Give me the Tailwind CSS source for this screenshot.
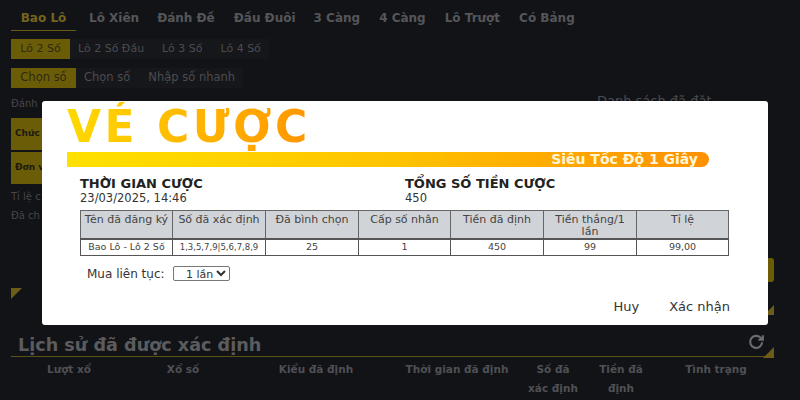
<!DOCTYPE html>
<html>
  <head>
    <meta charset="UTF-8" />
    <script src="https://cdn.jsdelivr.net/npm/@tailwindcss/browser@4"></script>
  </head>
  <body class="relative h-[400px] w-[800px] overflow-hidden bg-[#121317] font-['DejaVu_Sans',sans-serif]">
    <!-- page behind the dialog -->
    <div class="flex h-full flex-col pl-[11px]">
      <nav class="flex h-[31px] items-center pt-[5px] text-[12px] font-bold text-[#55565a]">
        <span class="flex h-[26px] w-[65px] items-center justify-center border-b border-[#6b5a16] text-[#75641c]">Bao Lô</span>
        <span class="ml-[13px]">Lô Xiên</span>
        <span class="ml-[18px]">Đánh Đề</span>
        <span class="ml-[19px]">Đầu Đuôi</span>
        <span class="ml-[18px]">3 Càng</span>
        <span class="ml-[19px]">4 Càng</span>
        <span class="ml-[19px]">Lô Trượt</span>
        <span class="ml-[19px]">Có Bảng</span>
      </nav>
      <div class="mt-[8px] flex h-[20px] w-[258px] items-center bg-[#16171b] text-[11px] text-[#4b4c50]">
        <span class="flex h-full w-[59px] items-center justify-center bg-[#6b5d08] text-[#2f2a10]">Lô 2 Số</span>
        <span class="ml-[8px]">Lô 2 Số Đầu</span>
        <span class="ml-[18px]">Lô 3 Số</span>
        <span class="ml-[18px]">Lô 4 Số</span>
      </div>
      <div class="mt-[9px] flex h-[20px] w-[232px] items-center bg-[#16171b] text-[11.5px] text-[#4b4c50]">
        <span class="flex h-full w-[65px] items-center justify-center bg-[#6b5d08] text-[#2f2a10]">Chọn số</span>
        <span class="ml-[8px]">Chọn số</span>
        <span class="ml-[18px]">Nhập số nhanh</span>
      </div>
      <p class="mt-[8px] text-[10px] text-[#45464a]">Đánh</p>
      <div class="mt-[7px] flex h-[32px] w-[60px] items-center bg-[#6b5d08] pl-[4px] text-[9px] font-bold text-[#1c1a0c]">Chức</div>
      <div class="mt-[2px] flex h-[32px] w-[60px] items-center bg-[#6b5d08] pl-[4px] text-[9px] font-bold text-[#1c1a0c]">Đơn v</div>
      <p class="mt-[5px] text-[10px] text-[#45464a]">Tỉ lệ c</p>
      <p class="mt-[4px] text-[10px] text-[#45464a]">Đã ch</p>
      <div class="mt-[65px] h-0 w-0 border-t-[11px] border-r-[11px] border-t-[#6b5d18] border-r-transparent"></div>
      <div class="mt-[31px] mr-[26px] flex h-[27px] items-center justify-between border-b border-[#5c5016] pl-[7px] pr-[9px]">
        <h2 class="mt-[5px] text-[17.6px] font-bold text-[#5b5c5e]">Lịch sử đã được xác định</h2>
        <svg viewBox="0 0 24 24" fill="none" stroke="#6a6b6d" stroke-width="3" class="-mt-[3px] h-[17px] w-[17px]">
          <path d="M20 13a8.5 8.5 0 1 1-2.5-6.5L20 9M21 3v6.5h-6.5" />
        </svg>
      </div>
      <div class="grid grid-cols-[104px_124px_142px_140px_52px_72px_130px] pl-[6px] text-center text-[10.5px] leading-[19px] font-bold text-[#4f5054]">
        <span class="pt-[3px]">Lượt xổ</span>
        <span class="pt-[3px]">Xổ số</span>
        <span class="pt-[3px]">Kiểu đã định</span>
        <span class="pt-[3px]">Thời gian đã định</span>
        <span class="pt-[3px]">Số đã xác định</span>
        <span class="ml-[12px] pt-[3px]">Tiền đã định</span>
        <span class="pt-[3px]">Tình trạng</span>
      </div>
    </div>
    <p class="absolute top-[91px] left-[597px] text-[13px] text-[#4b4c50]">Danh sách đã đặt</p>
    <div class="absolute top-[258px] right-[26px] h-[24px] w-[8px] rounded-r-[3px] bg-[#6b5d08]"></div>
    <div class="absolute top-[305px] right-[26px] h-0 w-0 border-b-[10px] border-l-[10px] border-b-[#6b5d18] border-l-transparent"></div>
    <div class="absolute top-[347px] right-[26px] h-0 w-0 border-b-[11px] border-l-[11px] border-b-[#6b5d18] border-l-transparent"></div>

    <!-- dialog -->
    <div class="absolute top-[101px] left-[42px] flex h-[224px] w-[726px] flex-col rounded-[3px] bg-white pl-[25px] text-[#333]">
      <h1 class="mt-[1px] h-[50px] w-fit bg-gradient-to-r from-[#ffd900] to-[#ff9500] bg-clip-text text-[44px] leading-[50px] font-bold tracking-[3.5px] text-transparent">VÉ CƯỢC</h1>
      <div class="flex h-[15px] w-[642px] items-center justify-end rounded-r-full bg-gradient-to-r from-[#ffe100] via-[#ffc400] to-[#ff9000] pr-[11px] text-[14px] font-bold text-[#fff6d8]">Siêu Tốc Độ 1 Giây</div>
      <div class="mt-[10px] flex pl-[13px] leading-[14px]">
        <div class="w-[325px]">
          <p class="text-[13px] font-bold text-[#222]">THỜI GIAN CƯỢC</p>
          <p class="text-[11.5px]">23/03/2025, 14:46</p>
        </div>
        <div>
          <p class="text-[13px] font-bold text-[#222]">TỔNG SỐ TIỀN CƯỢC</p>
          <p class="text-[11.5px]">450</p>
        </div>
      </div>
      <table class="mt-[5px] ml-[13px] w-[649px] table-fixed border-collapse text-center text-[11px] text-[#444]">
        <thead>
          <tr class="h-[28px] bg-[#d0d3d7] align-top leading-[12px]">
            <th class="w-[92px] border border-[#666] pt-[3px] font-normal whitespace-nowrap">Tên đã đăng ký</th>
            <th class="w-[93px] border border-[#666] pt-[3px] font-normal">Số đã xác định</th>
            <th class="w-[93px] border border-[#666] pt-[3px] font-normal">Đã bình chọn</th>
            <th class="w-[92px] border border-[#666] pt-[3px] font-normal">Cấp số nhân</th>
            <th class="w-[93px] border border-[#666] pt-[3px] font-normal">Tiền đã định</th>
            <th class="w-[93px] border border-[#666] px-[6px] pt-[3px] font-normal">Tiền thắng/1 lần</th>
            <th class="border border-[#666] pt-[3px] font-normal">Tỉ lệ</th>
          </tr>
        </thead>
        <tbody>
          <tr class="h-[16px] text-[9.5px]">
            <td class="border border-t-2 border-[#555]">Bao Lô - Lô 2 Số</td>
            <td class="border border-t-2 border-[#555] text-[8.5px]">1,3,5,7,9|5,6,7,8,9</td>
            <td class="border border-t-2 border-[#555]">25</td>
            <td class="border border-t-2 border-[#555]">1</td>
            <td class="border border-t-2 border-[#555]">450</td>
            <td class="border border-t-2 border-[#555]">99</td>
            <td class="border border-t-2 border-[#555]">99,00</td>
          </tr>
        </tbody>
      </table>
      <div class="mt-[9px] flex items-center pl-[20px] text-[12px]">
        <span class="w-[86px]">Mua liên tục:</span>
        <select class="h-[15px] w-[57px] rounded-[2px] border border-[#777] pl-[8px] text-[11px] leading-[13px]">
          <option>1 lần</option>
        </select>
      </div>
      <div class="mt-auto mb-[9px] flex justify-end gap-[30px] pr-[38px] text-[13px]">
        <span>Huy</span>
        <span>Xác nhận</span>
      </div>
    </div>
  </body>
</html>
